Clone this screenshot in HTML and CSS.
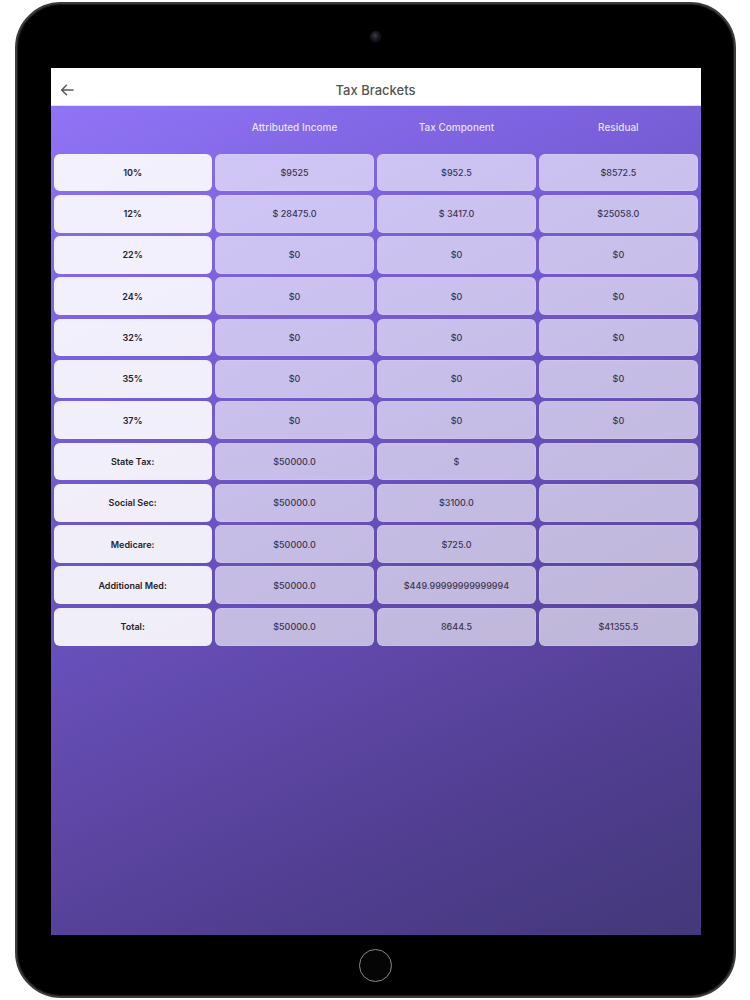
FILE: index.html
```html
<!DOCTYPE html>
<html>
<head>
<meta charset="utf-8">
<link rel="stylesheet" href="styles.css">
</head>
<body>
<div class="device">
  <div class="camera"></div>
  <div class="screen">
    <div class="appbar">
      <svg class="back" width="14" height="12" viewBox="0 0 14 12"><path d="M13 6H1.8M6.5 1.2L1.6 6l4.9 4.8" fill="none" stroke="#5a5a5a" stroke-width="1.5" stroke-linecap="round" stroke-linejoin="round"/></svg>
      <div class="title">Tax Brackets</div>
    </div>
    <div class="content">
      <div class="grid">
        <div class="hd"></div>
        <div class="hd">Attributed Income</div>
        <div class="hd">Tax Component</div>
        <div class="hd">Residual</div>

        <div class="cell label">10%</div><div class="cell">$9525</div><div class="cell">$952.5</div><div class="cell">$8572.5</div>
        <div class="cell label">12%</div><div class="cell">$ 28475.0</div><div class="cell">$ 3417.0</div><div class="cell">$25058.0</div>
        <div class="cell label">22%</div><div class="cell">$0</div><div class="cell">$0</div><div class="cell">$0</div>
        <div class="cell label">24%</div><div class="cell">$0</div><div class="cell">$0</div><div class="cell">$0</div>
        <div class="cell label">32%</div><div class="cell">$0</div><div class="cell">$0</div><div class="cell">$0</div>
        <div class="cell label">35%</div><div class="cell">$0</div><div class="cell">$0</div><div class="cell">$0</div>
        <div class="cell label">37%</div><div class="cell">$0</div><div class="cell">$0</div><div class="cell">$0</div>
        <div class="cell label">State Tax:</div><div class="cell">$50000.0</div><div class="cell">$</div><div class="cell"></div>
        <div class="cell label">Social Sec:</div><div class="cell">$50000.0</div><div class="cell">$3100.0</div><div class="cell"></div>
        <div class="cell label">Medicare:</div><div class="cell">$50000.0</div><div class="cell">$725.0</div><div class="cell"></div>
        <div class="cell label">Additional Med:</div><div class="cell">$50000.0</div><div class="cell">$449.99999999999994</div><div class="cell"></div>
        <div class="cell label">Total:</div><div class="cell">$50000.0</div><div class="cell">8644.5</div><div class="cell">$41355.5</div>
      </div>
    </div>
  </div>
  <div class="home"></div>
</div>
</body>
</html>
```
FILE: styles.css
```css
* { box-sizing: border-box; }
html, body { margin: 0; padding: 0; background: #ffffff; }
body {
  width: 750px;
  height: 1000px;
  padding: 2px 14px 2px 15px;
  font-family: Inter, "Noto Sans", sans-serif;
  overflow: hidden;
}
.device {
  width: 721px;
  height: 996px;
  background: #000;
  border-radius: 46px;
  border: 2px solid #3c3c3e;
  box-shadow: inset 0 0 0 1px #1a1a1a;
  display: flex;
  flex-direction: column;
  align-items: center;
  padding-top: 28px;
}
.camera {
  width: 9px;
  height: 9px;
  border-radius: 50%;
  background: radial-gradient(circle at 45% 40%, #3a3a44 0%, #15151a 60%, #0a0a0a 100%);
  box-shadow: 0 0 0 1px #1c1c1c;
}
.screen {
  margin-top: 27px;
  width: 650px;
  height: 867px;
  display: flex;
  flex-direction: column;
  overflow: hidden;
}
.appbar {
  height: 38px;
  background: #ffffff;
  position: relative;
  display: flex;
  align-items: center;
  justify-content: center;
  border-bottom: 1px solid #e4e0f0;
}
.back {
  position: absolute;
  left: 9px;
  top: 16px;
}
.title {
  font-size: 13px;
  color: #555;
  font-weight: 500;
  padding-top: 6px;
}
.content {
  flex: 1;
  background: linear-gradient(155deg, #9074f5 0%, #7c62de 22%, #6a52c0 45%, #5d46a4 65%, #4f3d8e 82%, #44387a 100%);
  padding: 0 3px;
}
.grid {
  display: grid;
  grid-template-columns: repeat(4, 1fr);
  grid-template-rows: 44px repeat(12, 37.8px);
  column-gap: 3.7px;
  row-gap: 3.5px;
}
.hd {
  display: flex;
  align-items: center;
  justify-content: center;
  font-size: 10px;
  font-weight: 500;
  color: rgba(255, 255, 255, 0.82);
  padding-bottom: 2px;
}
.cell {
  background: rgba(255, 255, 255, 0.62);
  border-radius: 6px;
  box-shadow: inset 0 0 0 1px rgba(255, 255, 255, 0.12);
  display: flex;
  align-items: center;
  justify-content: center;
  font-size: 9px;
  font-weight: 500;
  color: #3b3652;
}
.cell.label {
  background: rgba(255, 255, 255, 0.9);
  color: #24232c;
  font-weight: 600;
}
.home {
  margin-top: 14px;
  width: 33px;
  height: 33px;
  border-radius: 50%;
  border: 1.5px solid #8a8a8e;
  background: #050505;
}
```
